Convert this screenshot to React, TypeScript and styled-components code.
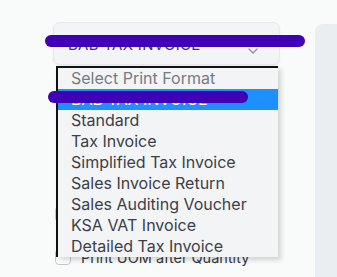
import React from "react"
import styled, { createGlobalStyle } from "styled-components"

const GlobalStyle = createGlobalStyle`
  html, body {
    margin: 0;
    padding: 0;
    background: #f9fafa;
    font-family: Inter, "Noto Sans", sans-serif;
  }
`

const formats = [
  "Standard",
  "Tax Invoice",
  "Simplified Tax Invoice",
  "Sales Invoice Return",
  "Sales Auditing Voucher",
  "KSA VAT Invoice",
  "Detailed Tax Invoice",
]

const Chevron = () => (
  <ChevronIcon width="10" height="6" viewBox="0 0 10 6">
    <path d="M1 1l4 4 4-4" fill="none" stroke="#8d939a" strokeWidth="1.4" strokeLinecap="round" strokeLinejoin="round" />
  </ChevronIcon>
)

const App = () => {
  return (
    <Page>
      <GlobalStyle />
      <FormColumn>
        <SelectField>
          <SelectValue>BAB TAX INVOICE</SelectValue>
          <Chevron />
        </SelectField>
        <CheckRow>
          <Checkbox />
          <CheckLabel>Print Without Amount</CheckLabel>
        </CheckRow>
        <CheckRow>
          <Checkbox />
          <CheckLabel>Print UOM after Quantity</CheckLabel>
        </CheckRow>
        <OptionList>
          <Option muted>Select Print Format</Option>
          <Option selected>BAB TAX INVOICE</Option>
          {formats.map((f) => (
            <Option key={f}>{f}</Option>
          ))}
        </OptionList>
        <Scribble top={35} left={45} width={260} />
        <Scribble top={91} left={48} width={200} />
      </FormColumn>
      <SidePanel />
    </Page>
  )
}

const Page = styled.div`
  display: flex;
  width: 337px;
  height: 277px;
  overflow: hidden;
  background: #f9fafa;
`

const FormColumn = styled.div`
  position: relative;
  flex: 0 0 315px;
  padding: 22px 0 0 53px;
  box-sizing: border-box;
`

const SelectField = styled.div`
  width: 227px;
  height: 43px;
  box-sizing: border-box;
  display: flex;
  align-items: center;
  justify-content: space-between;
  padding: 2px 21px 0 14px;
  background: #f3f4f6;
  border: 1px solid #e6e8eb;
  border-radius: 7px;
  box-shadow: 0 1px 2px rgba(0, 0, 0, 0.06);
`

const SelectValue = styled.span`
  font-size: 15px;
  color: #383b3f;
  letter-spacing: 0.3px;
`

const ChevronIcon = styled.svg`
  margin-top: 12px;
`

const CheckRow = styled.div`
  display: flex;
  align-items: center;
  gap: 10px;
  margin-top: 22px;
  height: 18px;
  & + & {
    margin-top: 25px;
  }
  &:nth-of-type(2) {
    margin-top: 140px;
  }
`

const Checkbox = styled.span`
  width: 16px;
  height: 16px;
  box-sizing: border-box;
  border: 1px solid #c3c7cc;
  border-radius: 4px;
  background: #fff;
  margin-left: 2px;
`

const CheckLabel = styled.span`
  font-size: 14.5px;
  color: #383b3f;
`

const OptionList = styled.div`
  position: absolute;
  top: 66px;
  left: 56px;
  width: 222px;
  box-sizing: border-box;
  border-top: 2px solid #111;
  border-left: 2px solid #111;
  background: #f3f4f6;
  box-shadow: 3px 3px 5px rgba(0, 0, 0, 0.16);
`

const Option = styled.div<{ muted?: boolean; selected?: boolean }>`
  height: 21px;
  line-height: 21px;
  padding-left: 13px;
  font-size: 16px;
  white-space: nowrap;
  color: ${(p) => (p.selected ? "#fff" : p.muted ? "#767b82" : "#3a4048")};
  background: ${(p) => (p.selected ? "#1e8fff" : "transparent")};
`

const Scribble = styled.div<{ top: number; left: number; width: number }>`
  position: absolute;
  top: ${(p) => p.top}px;
  left: ${(p) => p.left}px;
  width: ${(p) => p.width}px;
  height: 12px;
  border-radius: 6px;
  background: #3f00b6;
`

const SidePanel = styled.div`
  flex: 1;
  margin-top: 24px;
  background: #ebeef1;
  border-top-left-radius: 8px;
`

export default App
